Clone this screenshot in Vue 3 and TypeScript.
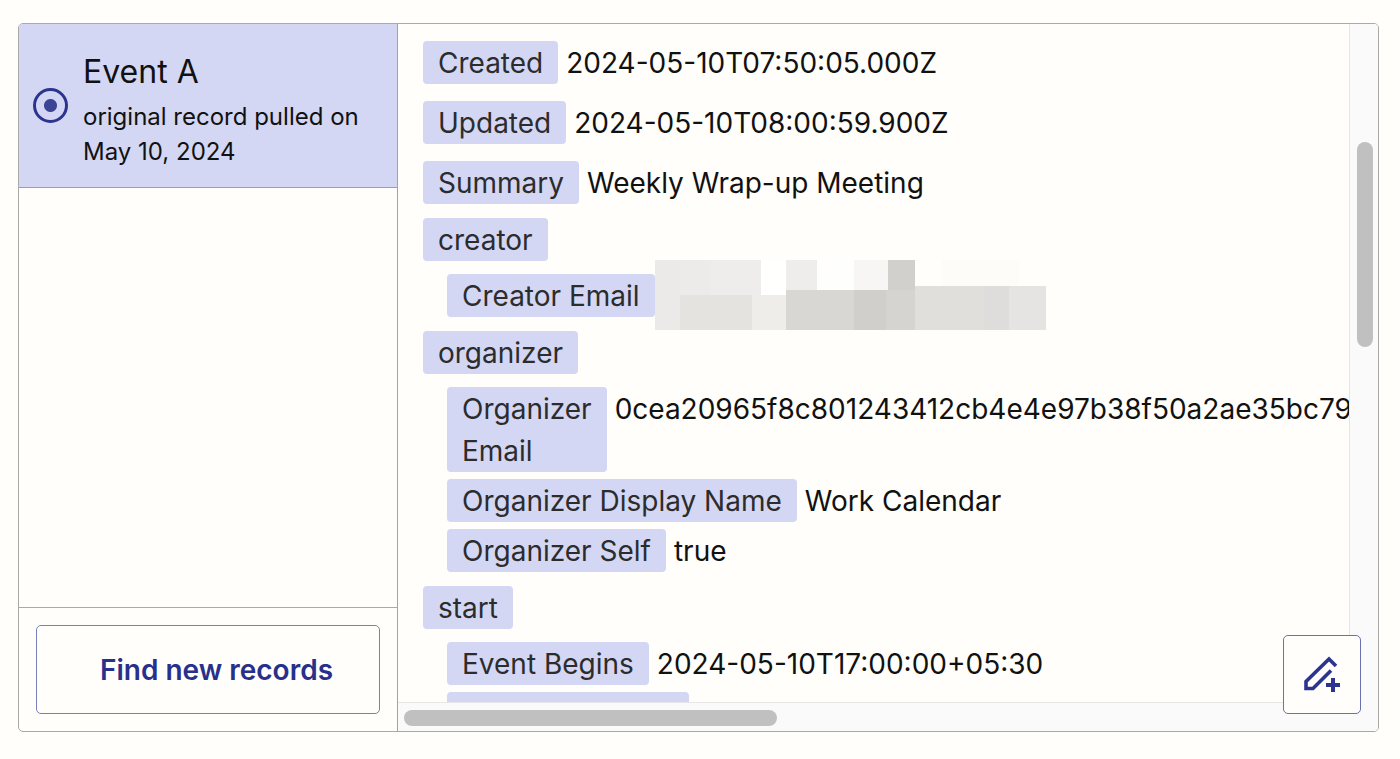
<script setup lang="ts">
import { ref } from 'vue'

interface Field {
  label: string
  value: string
  masked?: boolean
  wrapped?: boolean
}

interface Group {
  name: string
  fields: Field[]
}

interface MaskTile {
  x: number
  y: number
  w: number
  h: number
  fill: string
}

const selected = ref('event-a')

const fields: Field[] = [
  { label: 'Created', value: '2024-05-10T07:50:05.000Z' },
  { label: 'Updated', value: '2024-05-10T08:00:59.900Z' },
  { label: 'Summary', value: 'Weekly Wrap-up Meeting' },
]

const groups: Group[] = [
  {
    name: 'creator',
    fields: [{ label: 'Creator Email', value: '', masked: true }],
  },
  {
    name: 'organizer',
    fields: [
      { label: 'Organizer Email', value: '0cea20965f8c801243412cb4e4e97b38f50a2ae35bc79', wrapped: true },
      { label: 'Organizer Display Name', value: 'Work Calendar' },
      { label: 'Organizer Self', value: 'true' },
    ],
  },
  {
    name: 'start',
    fields: [
      { label: 'Event Begins', value: '2024-05-10T17:00:00+05:30' },
      { label: 'Event Timezone', value: 'Asia/Kolkata' },
    ],
  },
]

const tiles: MaskTile[] = [
  { x: 0, y: 0, w: 25, h: 70, fill: '#ebeae8' },
  { x: 25, y: 0, w: 31, h: 35, fill: '#ecebe9' },
  { x: 56, y: 0, w: 50, h: 35, fill: '#eeedeb' },
  { x: 106, y: 0, w: 25, h: 35, fill: '#fffffe' },
  { x: 131, y: 0, w: 31, h: 30, fill: '#eeedeb' },
  { x: 162, y: 0, w: 37, h: 30, fill: '#fefefc' },
  { x: 199, y: 0, w: 34, h: 30, fill: '#f7f6f4' },
  { x: 233, y: 0, w: 27, h: 30, fill: '#d1d0cd' },
  { x: 260, y: 0, w: 27, h: 27, fill: '#fffefb' },
  { x: 287, y: 0, w: 77, h: 27, fill: '#fdfcf9' },
  { x: 25, y: 35, w: 72, h: 35, fill: '#e4e3e0' },
  { x: 97, y: 35, w: 34, h: 35, fill: '#eeedea' },
  { x: 131, y: 30, w: 68, h: 40, fill: '#d8d7d4' },
  { x: 199, y: 30, w: 32, h: 40, fill: '#d0cfcc' },
  { x: 231, y: 30, w: 29, h: 40, fill: '#d5d4d1' },
  { x: 260, y: 26, w: 69, h: 44, fill: '#e0dfdc' },
  { x: 329, y: 26, w: 25, h: 44, fill: '#dedddb' },
  { x: 354, y: 26, w: 37, h: 44, fill: '#e5e4e2' },
]
</script>

<template>
  <main class="page">
    <section class="panel">
      <aside class="sidebar">
        <label class="record" for="event-a">
          <input id="event-a" v-model="selected" class="radio" type="radio" name="record" value="event-a" />
          <span class="record-text">
            <span class="record-title">Event A</span>
            <span class="record-note">original record pulled on May 10, 2024</span>
          </span>
        </label>
        <div class="sidebar-footer">
          <button class="find" type="button">Find new records</button>
        </div>
      </aside>

      <div class="viewer">
        <div class="details">
          <dl class="fields">
            <div v-for="field in fields" :key="field.label" class="row">
              <dt class="chip">{{ field.label }}</dt>
              <dd class="value">{{ field.value }}</dd>
            </div>
          </dl>
          <section v-for="group in groups" :key="group.name" class="group">
            <h2 class="chip">{{ group.name }}</h2>
            <dl class="children">
              <div v-for="field in group.fields" :key="field.label" class="row">
                <dt class="chip" :class="{ wrapped: field.wrapped }">{{ field.label }}</dt>
                <dd v-if="field.masked" class="masked">
                  <svg class="mask" width="391" height="70" viewBox="0 0 391 70" role="img" aria-label="Hidden">
                    <rect v-for="(t, i) in tiles" :key="i" :x="t.x" :y="t.y" :width="t.w" :height="t.h" :fill="t.fill" />
                  </svg>
                </dd>
                <dd v-else class="value">{{ field.value }}</dd>
              </div>
            </dl>
          </section>
        </div>
        <div class="track-y"><div class="thumb-y"></div></div>
        <div class="track-x"><div class="thumb-x"></div></div>
        <div class="corner"></div>
        <button class="edit" type="button" aria-label="Edit record">
          <svg width="40" height="40" viewBox="0 0 40 40" fill="none" stroke="#2c3490" stroke-width="3.6">
            <path d="M34 11 L27 4 L4 26.5 V33.5 H11 L29 15.5" />
            <path d="M31 23 V37 M24 30 H38" stroke-width="4" />
          </svg>
        </button>
      </div>
    </section>
  </main>
</template>

<style>
body {
  margin: 0;
  background: #fffefa;
}
</style>

<style scoped>
.page {
  box-sizing: border-box;
  display: flex;
  height: 100vh;
  padding: 23px 21px 27px 18px;
  font-family: Inter, "Liberation Sans", sans-serif;
  font-size: 28px;
  line-height: 42px;
  color: #111;
}
.panel {
  flex: 1;
  min-width: 0;
  display: grid;
  grid-template-columns: 379px minmax(0, 1fr);
  grid-template-rows: minmax(0, 1fr);
  border: 1px solid #a9a9a8;
  border-radius: 5px;
  overflow: hidden;
}
.sidebar {
  display: flex;
  flex-direction: column;
  justify-content: space-between;
  border-right: 1px solid #a3a3a3;
}
.record {
  display: flex;
  align-items: center;
  gap: 15px;
  padding: 0 24px 0 14px;
  background: #d3d7f4;
  border-bottom: 1px solid #9d9fae;
}
.radio {
  appearance: none;
  flex: none;
  box-sizing: border-box;
  width: 35px;
  height: 35px;
  margin: 0;
  border: 3px solid #2c3490;
  border-radius: 50%;
}
.radio:checked {
  background: radial-gradient(circle, #3c4496 6px, transparent 7px);
}
.record-text {
  display: flex;
  flex-direction: column;
  gap: 5px;
  padding: 25px 0 18px;
}
.record-title {
  font-size: 32px;
  line-height: 45px;
}
.record-note {
  font-size: 24px;
  line-height: 35px;
}
.sidebar-footer {
  display: flex;
  padding: 17px;
  border-top: 1px solid #a9a9a8;
}
.find {
  flex: 1;
  height: 89px;
  padding: 0 0 0 17px;
  border: 1px solid #7a80b8;
  border-radius: 5px;
  background: transparent;
  color: #28308c;
  font: inherit;
  font-weight: 600;
}
.viewer {
  position: relative;
  display: grid;
  grid-template-columns: minmax(0, 1fr) 29px;
  grid-template-rows: minmax(0, 1fr) 29px;
}
.details {
  overflow: hidden;
  padding: 17px 0 0 25px;
}
.fields,
.children {
  display: flex;
  flex-direction: column;
  margin: 0;
}
.fields {
  gap: 17px;
}
.children {
  gap: 7px;
  margin-top: 13px;
  padding-left: 24px;
}
.group {
  margin-top: 14px;
}
.row {
  display: flex;
  align-items: flex-start;
  gap: 8px;
}
.chip {
  flex: none;
  width: fit-content;
  margin: 0;
  padding: 1px 15px 0;
  border-radius: 4px;
  background: #d3d7f4;
  color: #2c2c2c;
  font-size: 28px;
  font-weight: 400;
}
.wrapped {
  width: min-content;
}
.value {
  margin: 0;
  padding-top: 1px;
  white-space: nowrap;
}
.masked {
  position: relative;
  margin: 0;
}
.mask {
  position: absolute;
  top: -14px;
  left: -8px;
}
.track-y,
.track-x,
.corner {
  background: #fafafa;
}
.track-y {
  box-sizing: border-box;
  padding: 118px 5px 0 7px;
  border-left: 1px solid #e6e6e6;
}
.thumb-y {
  height: 205px;
  width: 16px;
  border-radius: 8px;
  background: #c0c0c0;
}
.track-x {
  box-sizing: border-box;
  padding: 7px 6px 0;
  border-top: 1px solid #e6e6e6;
}
.thumb-x {
  width: 373px;
  height: 16px;
  border-radius: 8px;
  background: #c0c0c0;
}
.edit {
  position: absolute;
  right: 17px;
  bottom: 17px;
  display: grid;
  place-items: center;
  width: 78px;
  height: 79px;
  padding: 0;
  border: 1px solid #6a70b0;
  border-radius: 5px;
  background: #fffefb;
}
</style>
